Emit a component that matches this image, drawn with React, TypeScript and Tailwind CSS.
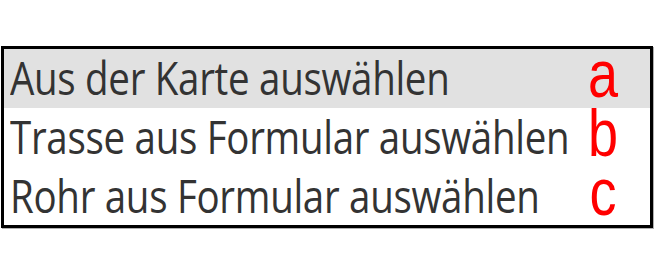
import React from 'react';

const rows = [
  { label: 'Aus der Karte auswählen', letter: 'a', active: true },
  { label: 'Trasse aus Formular auswählen', letter: 'b', active: false },
  { label: 'Rohr aus Formular auswählen', letter: 'c', active: false },
];

export default function App() {
  return (
    <div className="w-[664px] h-[277px] bg-white pt-[46px] pl-[1px]">
      <div className="w-[652px] h-[182px] border-[3px] border-black shadow-[1px_1px_0_#b0b0b0] bg-white">
        {rows.map((r) => (
          <div
            key={r.letter}
            className={`flex items-center h-[59px] pl-[6px] ${r.active ? 'bg-[#e1e1e1]' : ''}`}
          >
            <span className="flex-1 min-w-0 whitespace-nowrap origin-left text-[#333] text-[38.5px] leading-none font-['Open_Sans',sans-serif] tracking-[-0.3px] scale-y-[1.2] -mt-[2px]">
              {r.label}
            </span>
            <span className="w-[40px] mr-[27px] -mt-[10px] text-center text-[#ff0000] text-[54px] leading-[0.75] font-['Liberation_Sans',Arial,sans-serif] scale-y-125">
              {r.letter}
            </span>
          </div>
        ))}
      </div>
    </div>
  );
}
